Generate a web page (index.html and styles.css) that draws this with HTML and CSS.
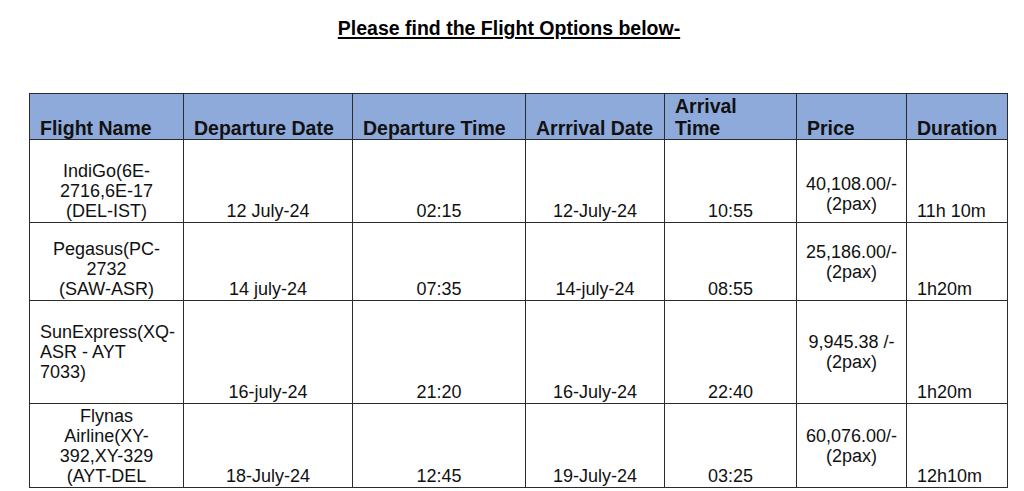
FILE: index.html
```html
<!DOCTYPE html>
<html lang="en">
<head>
<meta charset="utf-8">
<title>Flight Options</title>
<link rel="stylesheet" href="styles.css">
</head>
<body>
<div class="page">
  <h1 class="title">Please find the Flight Options below-</h1>
  <table class="flights">
    <colgroup>
      <col class="w-name">
      <col class="w-ddate">
      <col class="w-dtime">
      <col class="w-adate">
      <col class="w-atime">
      <col class="w-price">
      <col class="w-dur">
    </colgroup>
    <thead>
      <tr class="head-row">
        <th>Flight Name</th>
        <th>Departure Date</th>
        <th>Departure Time</th>
        <th>Arrrival Date</th>
        <th>Arrival<br>Time</th>
        <th>Price</th>
        <th>Duration</th>
      </tr>
    </thead>
    <tbody>
      <tr class="row-1">
        <td class="center">IndiGo(6E-<br>2716,6E-17<br>(DEL-IST)</td>
        <td class="center">12 July-24</td>
        <td class="center">02:15</td>
        <td class="center">12-July-24</td>
        <td class="center">10:55</td>
        <td class="price price-low">40,108.00/-<br>(2pax)</td>
        <td class="left">11h 10m</td>
      </tr>
      <tr class="row-2">
        <td class="center">Pegasus(PC-<br>2732<br>(SAW-ASR)</td>
        <td class="center">14 july-24</td>
        <td class="center">07:35</td>
        <td class="center">14-july-24</td>
        <td class="center">08:55</td>
        <td class="price">25,186.00/-<br>(2pax)</td>
        <td class="left">1h20m</td>
      </tr>
      <tr class="row-3">
        <td class="left middle">SunExpress(XQ-<br>ASR - AYT<br>7033)</td>
        <td class="center">16-july-24</td>
        <td class="center">21:20</td>
        <td class="center">16-July-24</td>
        <td class="center">22:40</td>
        <td class="price">9,945.38 /-<br>(2pax)</td>
        <td class="left">1h20m</td>
      </tr>
      <tr class="row-4">
        <td class="center">Flynas<br>Airline(XY-<br>392,XY-329<br>(AYT-DEL</td>
        <td class="center">18-July-24</td>
        <td class="center">12:45</td>
        <td class="center">19-July-24</td>
        <td class="center">03:25</td>
        <td class="price">60,076.00/-<br>(2pax)</td>
        <td class="left">12h10m</td>
      </tr>
    </tbody>
  </table>
</div>
</body>
</html>
```

FILE: styles.css
```css
html, body {
  margin: 0;
  padding: 0;
  background: #ffffff;
}

body {
  font-family: "Liberation Sans", Arial, sans-serif;
  color: #111111;
}

.page {
  width: 1024px;
  height: 491px;
  overflow: hidden;
  padding-left: 29px;
  box-sizing: border-box;
}

.title {
  margin: 0 0 0 -29px;
  padding: 17px 6px 0 0;
  font-size: 19.5px;
  line-height: 23px;
  font-weight: bold;
  text-align: center;
  text-decoration: underline;
  text-decoration-thickness: 2px;
  text-underline-offset: 2px;
  color: #000000;
  height: 93px;
  box-sizing: border-box;
}

.flights {
  border-collapse: collapse;
  table-layout: fixed;
  width: 978px;
}

.w-name { width: 154px; }
.w-ddate { width: 169px; }
.w-dtime { width: 173px; }
.w-adate { width: 139px; }
.w-atime { width: 132px; }
.w-price { width: 110px; }
.w-dur { width: 101px; }

.flights th,
.flights td {
  border: 1px solid #2b2b2b;
  padding: 0 10px 1px 10px;
  vertical-align: bottom;
  overflow: hidden;
}

.flights th {
  background: #8eaadb;
  font-size: 19.5px;
  line-height: 22px;
  font-weight: bold;
  text-align: left;
  color: #111111;
  padding-bottom: 0;
}

.flights td {
  font-size: 18px;
  line-height: 20px;
  color: #111111;
}

.head-row { height: 46px; }
.row-1 { height: 83px; }
.row-2 { height: 78px; }
.row-3 { height: 103px; }
.row-4 { height: 84px; }

.center { text-align: center; }
.left { text-align: left; }
.middle { vertical-align: middle !important; }

.flights td.price {
  text-align: center;
  vertical-align: middle;
  padding: 0 4px;
}

.flights td.price-low {
  padding-top: 26px;
}
```
